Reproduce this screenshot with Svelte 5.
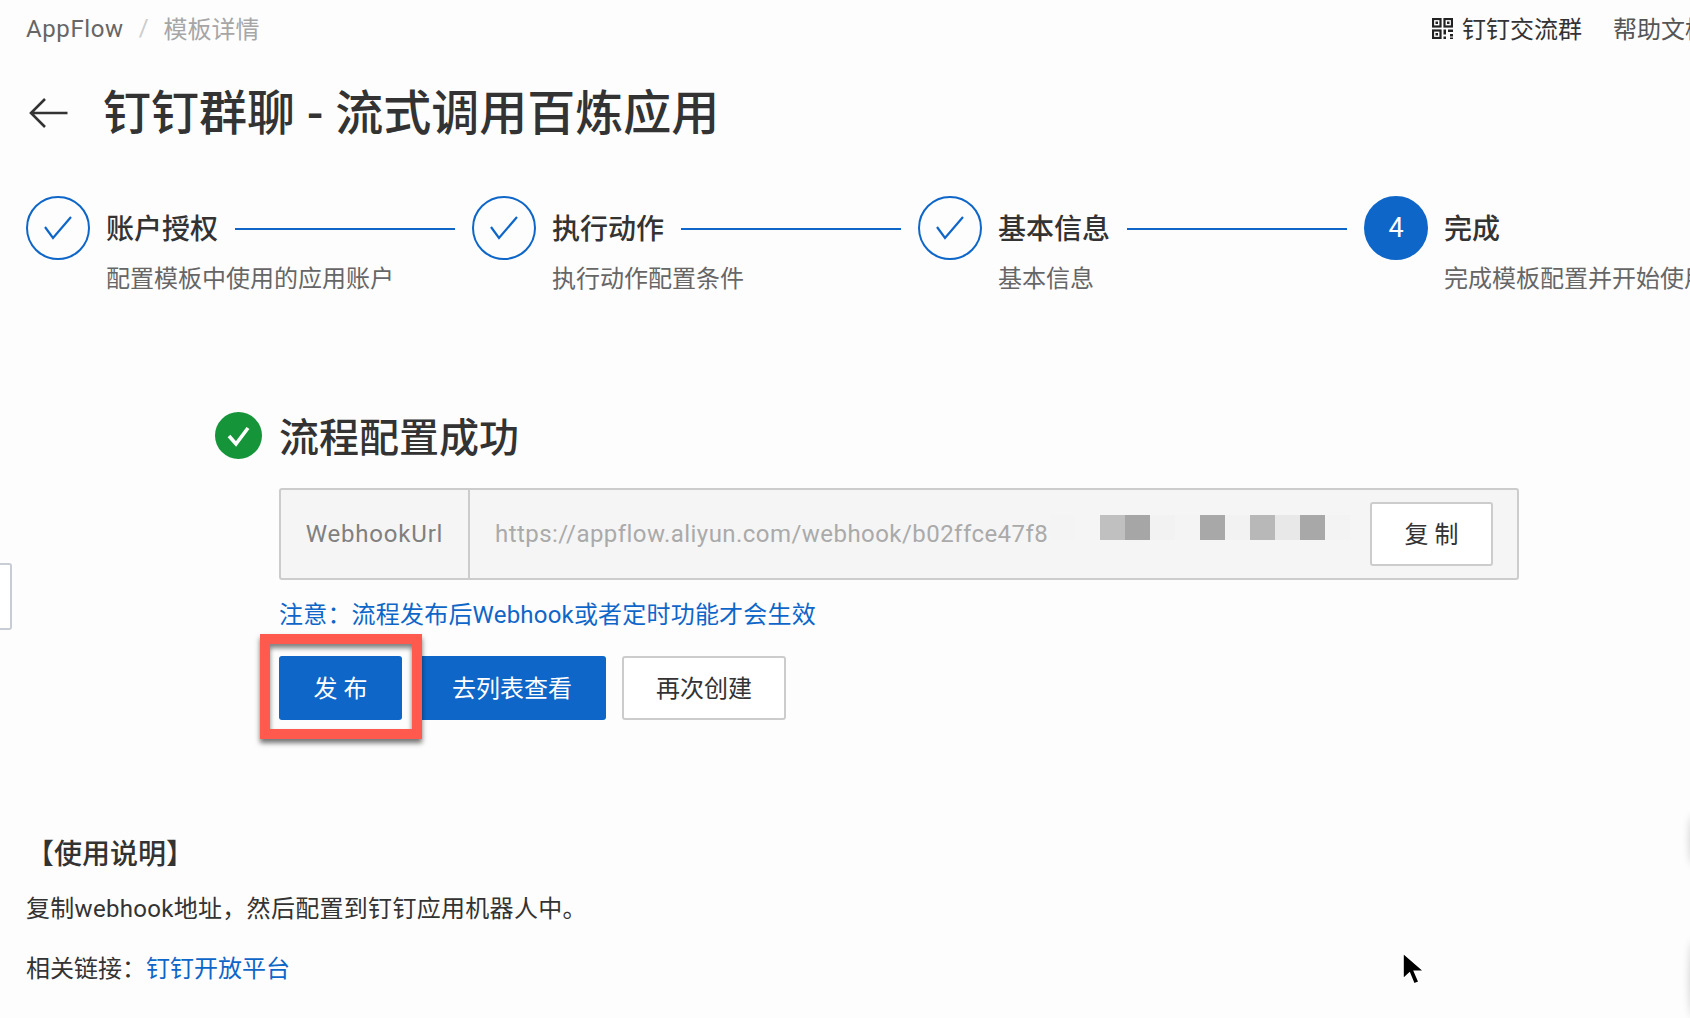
<script>
    const steps = [
        { title: '账户授权', desc: '配置模板中使用的应用账户', done: true },
        { title: '执行动作', desc: '执行动作配置条件', done: true },
        { title: '基本信息', desc: '基本信息', done: true },
        { title: '完成', desc: '完成模板配置并开始使用', done: false, num: 4 }
    ];

    // pixelated cover over the tail of the webhook url
    const mosaic = ['#f4f4f4', '#f5f5f5', '#c0c0c0', '#a6a6a6', '#f2f2f2', '#f4f4f4', '#a8a8a8', '#f2f2f2', '#b8b8b8', '#e8e8e8', '#a8a8a8', '#f3f3f3'];
</script>

<div class="page">
    <header class="topbar">
        <nav class="crumbs">
            <span class="crumb-root">AppFlow</span>
            <span class="crumb-sep">/</span>
            <span class="crumb-current">模板详情</span>
        </nav>
        <div class="top-links">
            <span class="top-link">
                <svg class="qr" viewBox="0 0 21 21" aria-hidden="true">
                    <g fill="none" stroke="#222" stroke-width="2.2">
                        <rect x="1" y="1" width="7.5" height="7.5" />
                        <rect x="12.5" y="1" width="7.5" height="7.5" />
                        <rect x="1" y="12.5" width="7.5" height="7.5" />
                    </g>
                    <g fill="#222">
                        <rect x="3.5" y="3.5" width="2.5" height="2.5" />
                        <rect x="15" y="3.5" width="2.5" height="2.5" />
                        <rect x="3.5" y="15" width="2.5" height="2.5" />
                        <rect x="11.5" y="11.5" width="2.5" height="5" />
                        <rect x="16" y="11.5" width="5" height="2.5" />
                        <rect x="18" y="16" width="3" height="2.5" />
                        <rect x="11.5" y="18.5" width="2.5" height="2.5" />
                        <rect x="18" y="19.5" width="3" height="1.5" />
                    </g>
                </svg>
                钉钉交流群
            </span>
            <span class="top-link help">帮助文档</span>
        </div>
    </header>

    <div class="title-row">
        <svg class="back" viewBox="0 0 39 30" aria-hidden="true">
            <path d="M38.5 15H2M16 1 2 15l14 14" fill="none" stroke="#333" stroke-width="2.6" />
        </svg>
        <h1>钉钉群聊 - 流式调用百炼应用</h1>
    </div>

    <div class="steps">
        {#each steps as step, i}
            <div class="step" class:last={i === steps.length - 1}>
                <div class="dot" class:active={!step.done}>
                    {#if step.done}
                        <svg viewBox="0 0 64 64" aria-hidden="true">
                            <path d="M19 31l8 11 18-21" fill="none" stroke="#0e66c8" stroke-width="2.2" />
                        </svg>
                    {:else}
                        {step.num}
                    {/if}
                </div>
                <div class="step-body">
                    <div class="step-head">
                        <span class="step-title">{step.title}</span>
                        {#if i < steps.length - 1}
                            <span class="step-line"></span>
                        {/if}
                    </div>
                    <div class="step-desc">{step.desc}</div>
                </div>
            </div>
        {/each}
    </div>

    <section class="result">
        <div class="result-head">
            <svg class="ok" viewBox="0 0 47 47" aria-hidden="true">
                <circle cx="23.5" cy="23.5" r="23.5" fill="#16943a" />
                <path d="M14 24l7 8 12-16" fill="none" stroke="#fff" stroke-width="3.6" />
            </svg>
            <h2>流程配置成功</h2>
        </div>
        <div class="result-body">
            <div class="webhook">
                <div class="addon">WebhookUrl</div>
                <div class="field">
                    <span class="url">https://appflow.aliyun.com/webhook/b02ffce47f8</span>
                    <span class="mosaic">
                        {#each mosaic as color}
                            <i style="background: {color}"></i>
                        {/each}
                    </span>
                    <button class="btn copy">复 制</button>
                </div>
            </div>
            <p class="notice">注意：流程发布后Webhook或者定时功能才会生效</p>
            <div class="actions">
                <div class="publish-wrap">
                    <button class="btn primary publish">发 布</button>
                    <span class="marker"></span>
                </div>
                <button class="btn primary list">去列表查看</button>
                <button class="btn again">再次创建</button>
            </div>
        </div>
    </section>

    <section class="usage">
        <h3>【使用说明】</h3>
        <p class="first">复制webhook地址，然后配置到钉钉应用机器人中。</p>
        <p class="second">相关链接：<a href="#top">钉钉开放平台</a></p>
    </section>
</div>

<span class="side-tab"></span>
<span class="edge edge-a"></span>
<span class="edge edge-b"></span>
<svg class="cursor" viewBox="0 0 24 36" aria-hidden="true">
    <path d="M2 1v26l6.5-6 4.5 11 5-2-4.600-10.800H23z" fill="#000" stroke="#fff" stroke-width="1.6" />
</svg>

<style>
    :global(body) {
        margin: 0;
        background: #fdfdfd;
        overflow: hidden;
    }

    .page {
        box-sizing: border-box;
        width: 1735px;
        height: 1018px;
        padding: 0 26px;
        overflow: hidden;
        color: #333;
        font-family: Roboto, "Noto Sans CJK SC", sans-serif;
        font-size: 24px;
    }

    .topbar {
        display: flex;
        justify-content: space-between;
        align-items: center;
        height: 55px;
    }

    .crumbs {
        display: flex;
        align-items: center;
    }

    .crumb-root {
        color: #666;
        letter-spacing: 0.6px;
        margin-top: 2px;
    }

    .crumb-sep {
        margin: 0 15px;
        color: #ccc;
    }

    .crumb-current {
        color: #a6a6a6;
    }

    .top-links {
        display: flex;
        align-items: center;
        gap: 31px;
    }

    .top-link {
        display: flex;
        align-items: center;
        gap: 9px;
    }

    .help {
        color: #555;
    }

    .qr {
        width: 21px;
        height: 21px;
        margin-top: 2px;
    }

    .title-row {
        display: flex;
        align-items: center;
        height: 60px;
        margin-top: 29px;
    }

    .back {
        width: 39px;
        height: 30px;
        margin: -2px 35px 0 3px;
        flex: none;
    }

    h1 {
        margin: 0;
        font-size: 48px;
        line-height: 60px;
        font-weight: 500;
    }

    .steps {
        display: flex;
        margin-top: 52px;
    }

    .step {
        display: flex;
        gap: 16px;
        width: 446px;
        flex: none;
    }

    .step.last {
        width: 400px;
    }

    .dot {
        box-sizing: border-box;
        display: flex;
        align-items: center;
        justify-content: center;
        width: 64px;
        height: 64px;
        flex: none;
        border: 2px solid #0e66c8;
        border-radius: 50%;
        color: #fff;
        font-size: 27px;
    }

    .dot svg {
        width: 64px;
        height: 64px;
        flex: none;
    }

    .dot.active {
        background: #0e66c8;
    }

    .step-body {
        flex: 1;
        min-width: 0;
    }

    .step-head {
        box-sizing: border-box;
        display: flex;
        align-items: center;
        gap: 17px;
        height: 64px;
        padding: 2px 17px 0 0;
    }

    .step-title {
        flex: none;
        margin-top: -4px;
        font-size: 28px;
        font-weight: 500;
    }

    .step-line {
        flex: 1;
        height: 2px;
        background: #0e66c8;
    }

    .step-desc {
        margin-top: 3px;
        color: #666;
        line-height: 32px;
        white-space: nowrap;
    }

    .result {
        margin: 117px 0 0 189px;
    }

    .result-head {
        display: flex;
        align-items: center;
        gap: 17px;
        height: 47px;
    }

    .ok {
        width: 47px;
        height: 47px;
    }

    h2 {
        margin: 0;
        padding-top: 6px;
        font-size: 40px;
        font-weight: 500;
        line-height: 47px;
    }

    .result-body {
        margin-left: 64px;
    }

    .webhook {
        box-sizing: border-box;
        display: flex;
        width: 1240px;
        height: 92px;
        margin-top: 29px;
        border: 2px solid #ccc;
        border-radius: 3px;
        background: #f5f5f5;
    }

    .addon {
        box-sizing: border-box;
        display: flex;
        align-items: center;
        justify-content: center;
        width: 189px;
        border-right: 2px solid #ccc;
        color: #808080;
        letter-spacing: 0.8px;
    }

    .field {
        flex: 1;
        display: flex;
        align-items: center;
        padding: 0 24px 0 25px;
        min-width: 0;
    }

    .url {
        flex: none;
        width: 552px;
        overflow: hidden;
        white-space: nowrap;
        color: #aaa;
        letter-spacing: 0.45px;
    }

    .mosaic {
        display: flex;
        flex: none;
        margin-left: 3px;
        margin-top: -13px;
    }

    .mosaic i {
        display: block;
        width: 25px;
        height: 25px;
    }

    .btn {
        box-sizing: border-box;
        height: 64px;
        border: 2px solid #ccc;
        border-radius: 3px;
        background: #fff;
        color: #333;
        font: inherit;
        padding: 0 0 3px;
    }

    .copy {
        flex: none;
        width: 123px;
        height: 64px;
        margin-left: auto;
    }

    .notice {
        margin: 19px 0 0;
        line-height: 32px;
        color: #0e66c8;
        letter-spacing: 0.2px;
    }

    .actions {
        display: flex;
        gap: 16px;
        margin-top: 25px;
    }

    .publish-wrap {
        position: relative;
        display: flex;
    }

    .primary {
        border: none;
        background: #0e66c8;
        color: #fff;
    }

    .publish {
        width: 123px;
    }

    .marker {
        position: absolute;
        left: -19px;
        top: -22px;
        box-sizing: border-box;
        width: 162px;
        height: 105px;
        border: 10px solid #ff5a4d;
        box-shadow: 0 4px 5px rgba(0, 0, 0, 0.55), inset 0 4px 5px rgba(0, 0, 0, 0.5);
        z-index: 1;
    }

    .list {
        width: 188px;
    }

    .again {
        width: 164px;
    }

    .usage {
        margin-top: 115px;
    }

    h3 {
        margin: 0;
        font-size: 28px;
        font-weight: 500;
        line-height: 40px;
    }

    .usage p {
        margin: 0;
        line-height: 32px;
    }

    .usage .first {
        margin-top: 18px;
        letter-spacing: 0.3px;
    }

    .usage .second {
        margin-top: 28px;
    }

    a {
        color: #0e66c8;
        text-decoration: none;
    }

    .side-tab {
        position: absolute;
        left: 0;
        top: 563px;
        box-sizing: border-box;
        width: 12px;
        height: 67px;
        border: 2px solid #c8ccd4;
        border-left: none;
        border-radius: 0 3px 3px 0;
        background: #fff;
    }

    .edge {
        position: absolute;
        right: -8px;
        width: 8px;
        border-radius: 50%;
        box-shadow: 0 0 8px rgba(0, 0, 0, 0.2);
    }

    .edge-a {
        top: 815px;
        height: 50px;
    }

    .edge-b {
        top: 940px;
        height: 78px;
    }

    .cursor {
        position: absolute;
        left: 1401px;
        top: 952px;
        width: 24px;
        height: 36px;
    }
</style>
